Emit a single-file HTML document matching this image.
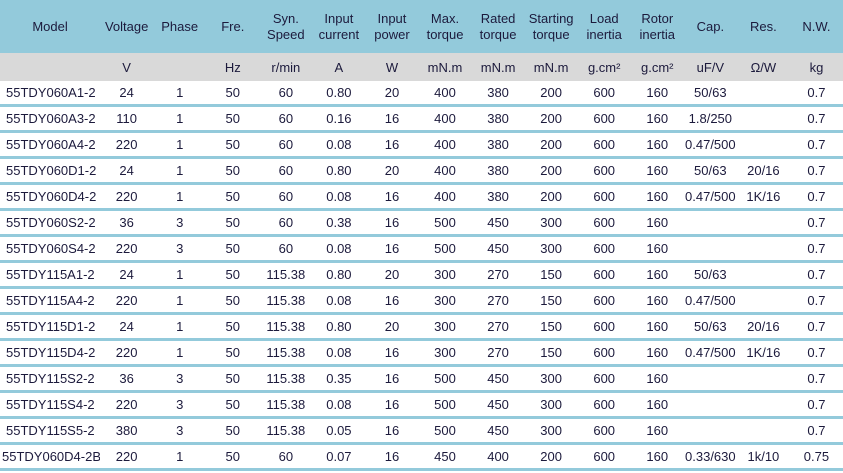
<!DOCTYPE html>
<html><head><style>
body{margin:0;background:#fff;font-family:"Liberation Sans",Arial,sans-serif;font-size:13px;color:#1c1a3c;}
table{border-collapse:collapse;table-layout:fixed;width:843px;position:absolute;left:0;top:0;}
td{text-align:center;padding:0;white-space:nowrap;overflow:hidden;}
tr.h td{background:#93cadb;height:53px;line-height:16px;}
tr.u td{background:#d9d9d9;height:27px;padding-top:1px;}
tr.r td{height:23px;border-bottom:3px solid #93cadb;}
tr.r td:first-child{text-align:left;padding-left:6px;}
tr.first td{padding-top:1px;}
</style></head><body>
<table>
<colgroup><col style="width:100px"><col span="14" style="width:53px"></colgroup>
<tr class="h"><td>Model</td><td>Voltage</td><td>Phase</td><td>Fre.</td><td>Syn.<br>Speed</td><td>Input<br>current</td><td>Input<br>power</td><td>Max.<br>torque</td><td>Rated<br>torque</td><td>Starting<br>torque</td><td>Load<br>inertia</td><td>Rotor<br>inertia</td><td>Cap.</td><td>Res.</td><td>N.W.</td></tr>
<tr class="u"><td></td><td>V</td><td></td><td>Hz</td><td>r/min</td><td>A</td><td>W</td><td>mN.m</td><td>mN.m</td><td>mN.m</td><td>g.cm²</td><td>g.cm²</td><td>uF/V</td><td>Ω/W</td><td>kg</td></tr>
<tr class="r"><td>55TDY060A1-2</td><td>24</td><td>1</td><td>50</td><td>60</td><td>0.80</td><td>20</td><td>400</td><td>380</td><td>200</td><td>600</td><td>160</td><td>50/63</td><td></td><td>0.7</td></tr>
<tr class="r"><td>55TDY060A3-2</td><td>110</td><td>1</td><td>50</td><td>60</td><td>0.16</td><td>16</td><td>400</td><td>380</td><td>200</td><td>600</td><td>160</td><td>1.8/250</td><td></td><td>0.7</td></tr>
<tr class="r"><td>55TDY060A4-2</td><td>220</td><td>1</td><td>50</td><td>60</td><td>0.08</td><td>16</td><td>400</td><td>380</td><td>200</td><td>600</td><td>160</td><td>0.47/500</td><td></td><td>0.7</td></tr>
<tr class="r"><td>55TDY060D1-2</td><td>24</td><td>1</td><td>50</td><td>60</td><td>0.80</td><td>20</td><td>400</td><td>380</td><td>200</td><td>600</td><td>160</td><td>50/63</td><td>20/16</td><td>0.7</td></tr>
<tr class="r"><td>55TDY060D4-2</td><td>220</td><td>1</td><td>50</td><td>60</td><td>0.08</td><td>16</td><td>400</td><td>380</td><td>200</td><td>600</td><td>160</td><td>0.47/500</td><td>1K/16</td><td>0.7</td></tr>
<tr class="r"><td>55TDY060S2-2</td><td>36</td><td>3</td><td>50</td><td>60</td><td>0.38</td><td>16</td><td>500</td><td>450</td><td>300</td><td>600</td><td>160</td><td></td><td></td><td>0.7</td></tr>
<tr class="r"><td>55TDY060S4-2</td><td>220</td><td>3</td><td>50</td><td>60</td><td>0.08</td><td>16</td><td>500</td><td>450</td><td>300</td><td>600</td><td>160</td><td></td><td></td><td>0.7</td></tr>
<tr class="r"><td>55TDY115A1-2</td><td>24</td><td>1</td><td>50</td><td>115.38</td><td>0.80</td><td>20</td><td>300</td><td>270</td><td>150</td><td>600</td><td>160</td><td>50/63</td><td></td><td>0.7</td></tr>
<tr class="r"><td>55TDY115A4-2</td><td>220</td><td>1</td><td>50</td><td>115.38</td><td>0.08</td><td>16</td><td>300</td><td>270</td><td>150</td><td>600</td><td>160</td><td>0.47/500</td><td></td><td>0.7</td></tr>
<tr class="r"><td>55TDY115D1-2</td><td>24</td><td>1</td><td>50</td><td>115.38</td><td>0.80</td><td>20</td><td>300</td><td>270</td><td>150</td><td>600</td><td>160</td><td>50/63</td><td>20/16</td><td>0.7</td></tr>
<tr class="r"><td>55TDY115D4-2</td><td>220</td><td>1</td><td>50</td><td>115.38</td><td>0.08</td><td>16</td><td>300</td><td>270</td><td>150</td><td>600</td><td>160</td><td>0.47/500</td><td>1K/16</td><td>0.7</td></tr>
<tr class="r"><td>55TDY115S2-2</td><td>36</td><td>3</td><td>50</td><td>115.38</td><td>0.35</td><td>16</td><td>500</td><td>450</td><td>300</td><td>600</td><td>160</td><td></td><td></td><td>0.7</td></tr>
<tr class="r"><td>55TDY115S4-2</td><td>220</td><td>3</td><td>50</td><td>115.38</td><td>0.08</td><td>16</td><td>500</td><td>450</td><td>300</td><td>600</td><td>160</td><td></td><td></td><td>0.7</td></tr>
<tr class="r"><td>55TDY115S5-2</td><td>380</td><td>3</td><td>50</td><td>115.38</td><td>0.05</td><td>16</td><td>500</td><td>450</td><td>300</td><td>600</td><td>160</td><td></td><td></td><td>0.7</td></tr>
<tr class="r"><td style="padding-left:2px">55TDY060D4-2B</td><td>220</td><td>1</td><td>50</td><td>60</td><td>0.07</td><td>16</td><td>450</td><td>400</td><td>200</td><td>600</td><td>160</td><td>0.33/630</td><td>1k/10</td><td>0.75</td></tr>
</table>
</body></html>
